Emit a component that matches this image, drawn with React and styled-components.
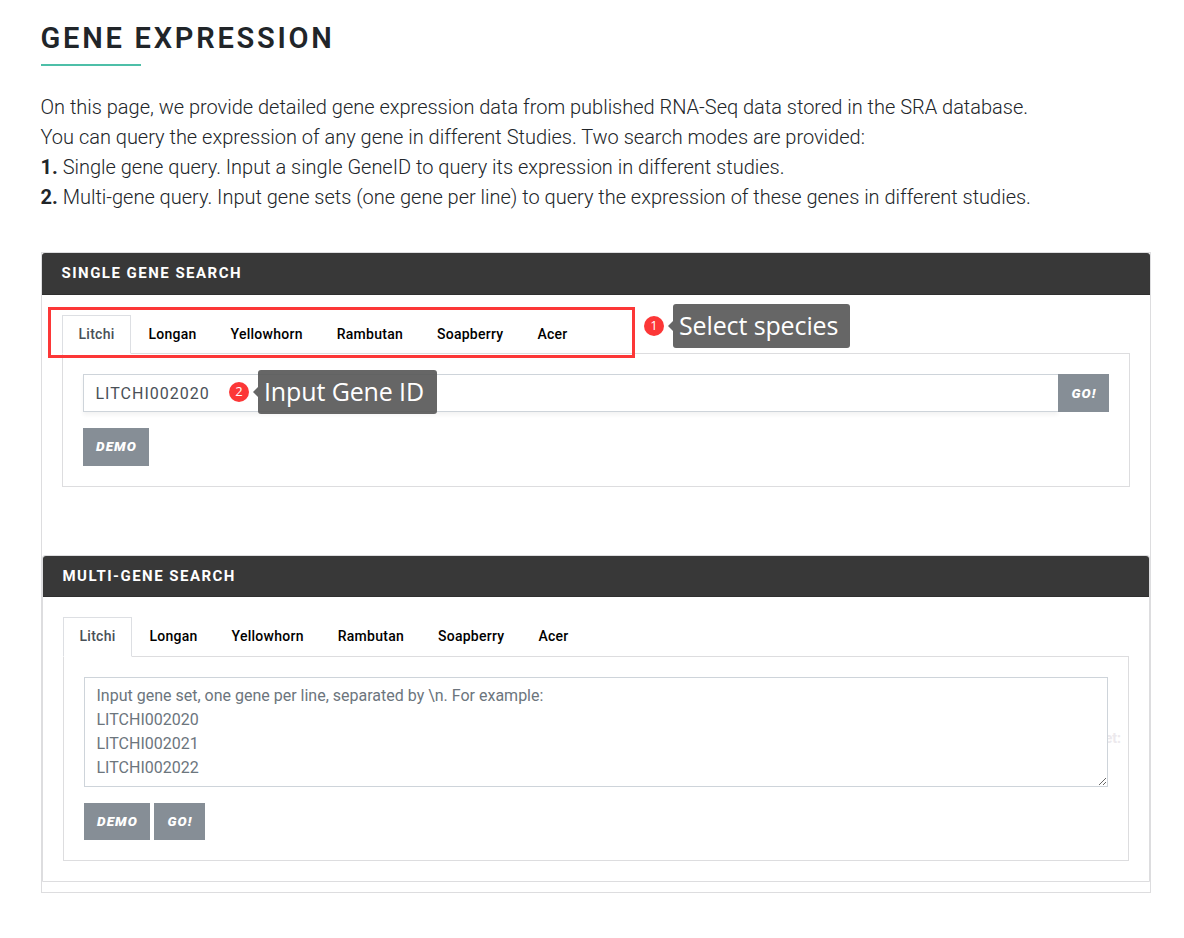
import React from "react";
import styled, { createGlobalStyle } from "styled-components";

const GlobalStyle = createGlobalStyle`
  *, *::before, *::after { box-sizing: border-box; }
  body {
    margin: 0;
    background: #fff;
    color: #212529;
    font-family: Roboto, "Liberation Sans", sans-serif;
    font-size: 16px;
  }
`;

const Page = styled.main`
  position: relative;
  width: 1184px;
  height: 938px;
  padding: 20px 33px 0 41px;
  overflow: hidden;
`;

const Title = styled.h1`
  margin: 0 0 0 -0.5px;
  height: 36px;
  font-size: 29px;
  line-height: 36px;
  font-weight: 600;
  letter-spacing: 2.77px;
  white-space: nowrap;
`;

const Rule = styled.div`
  width: 100px;
  height: 2px;
  margin: 8px 0 26px;
  background: #4dbfa8;
`;

const Intro = styled.div`
  height: 120px;
  margin: 0 0 40px -0.5px;
`;

const IntroLine = styled.p`
  margin: 0;
  font-size: 20px;
  line-height: 30px;
  font-weight: 300;
  letter-spacing: -0.01px;
  white-space: nowrap;

  b { font-weight: 700; }
`;

const Card = styled.section`
  width: ${(p) => (p.$nested ? "1108px" : "1110px")};
  height: ${(p) => p.$height};
  margin-top: ${(p) => (p.$nested ? "68px" : "0")};
  border: 1px solid #dddddf;
  border-radius: ${(p) => (p.$nested ? "3px 3px 0 0" : "0")};
`;

const CardHeader = styled.header`
  height: ${(p) => p.$height};
  padding: 0 19.5px;
  border-bottom: 1px solid #2f2f2f;
  border-radius: 3px 3px 0 0;
  background: #383838;
  color: #fff;
  font-size: 15px;
  line-height: 40px;
  font-weight: 700;
  letter-spacing: 1.48px;
  white-space: nowrap;
`;

const CardBody = styled.div`
  padding: 20px 20px 0;
`;

const Tabs = styled.nav`
  display: flex;
  height: ${(p) => p.$height};
  margin-bottom: -1px;
`;

const Tab = styled.span`
  position: relative;
  padding: ${(p) => (p.$active ? "0 15.9px 0 15.5px" : "0 16px")};
  border: 1px solid ${(p) => (p.$active ? "#dddfe3" : "transparent")};
  border-bottom-color: ${(p) => (p.$active ? "#fff" : "transparent")};
  background: ${(p) => (p.$active ? "#fff" : "transparent")};
  color: ${(p) => (p.$active ? "#495057" : "#000")};
  font-size: 14px;
  line-height: 37px;
  font-weight: 500;
  letter-spacing: 0.26px;
  white-space: nowrap;
`;

const Panel = styled.div`
  height: ${(p) => p.$height};
  padding: 20px;
  border: 1px solid #dddddf;
`;

const SearchRow = styled.div`
  display: flex;
  height: 38px;
  margin-bottom: 16px;
`;

const GeneInput = styled.input`
  flex: 1;
  min-width: 0;
  padding: 0 12px 0 11.5px;
  border: 1px solid #ced4da;
  border-right: 0;
  border-radius: 0;
  outline: 0;
  background: #fff;
  box-shadow: 0 3px 4px rgba(0, 0, 0, 0.05);
  color: #495057;
  font: 400 16px Roboto, sans-serif;
  letter-spacing: 1px;
`;

const Button = styled.button`
  width: ${(p) => p.$width};
  height: ${(p) => p.$height || "38px"};
  padding: ${(p) => (p.$attached ? "0 0 0 1px" : "0 0 2px 1px")};
  border: 0;
  background: #868e96;
  color: #fff;
  font: italic 900 13.6px/36px Roboto, sans-serif;
  letter-spacing: 1.1px;
`;

const ButtonRow = styled.div`
  display: flex;
  gap: 4px;
`;

const GeneSetField = styled.div`
  position: relative;
  height: 110px;
  margin-bottom: 16px;
`;

const GeneSet = styled.textarea`
  position: relative;
  display: block;
  width: 100%;
  height: 110px;
  padding: 6px 12px 6px 11.5px;
  border: 1px solid #ced4da;
  border-radius: 0;
  outline: 0;
  overflow: hidden;
  resize: vertical;
  background: #fff;
  font: 400 16px/24px Roboto, sans-serif;

  &::placeholder { color: #6c757d; opacity: 1; }
`;

const FieldHint = styled.span`
  position: absolute;
  right: -13px;
  top: 51px;
  color: #ece9ed;
  font-size: 14px;
  line-height: 20px;
  font-weight: 700;
`;

const Highlight = styled.div`
  position: absolute;
  left: 48px;
  top: 307px;
  width: 587px;
  height: 51px;
  border: 3px solid #fc3737;
`;

const Marker = styled.span`
  position: absolute;
  left: ${(p) => p.$x}px;
  top: ${(p) => p.$y}px;
  width: 20px;
  height: 20px;
  border-radius: 50%;
  background: #fc3737;
  color: #fff;
  font: 400 13px/19px "Open Sans", "Noto Sans", sans-serif;
  text-align: center;
`;

const Callout = styled.div`
  position: absolute;
  left: ${(p) => p.$x}px;
  top: ${(p) => p.$y}px;
  width: ${(p) => p.$width}px;
  height: 44px;
  padding-left: 6px;
  border-radius: 3px;
  background: rgba(89, 89, 89, 0.92);
  color: #fff;
  font: 400 25px/43px "Open Sans", "Noto Sans", sans-serif;
  letter-spacing: -0.12px;
  white-space: nowrap;

  &::before {
    content: "";
    position: absolute;
    left: -5px;
    top: 17px;
    border: solid transparent;
    border-width: 5px 5px 5px 0;
    border-right-color: rgba(89, 89, 89, 0.92);
  }
`;

const SPECIES = ["Litchi", "Longan", "Yellowhorn", "Rambutan", "Soapberry", "Acer"];

const EXAMPLE = `Input gene set, one gene per line, separated by \\n. For example:
LITCHI002020
LITCHI002021
LITCHI002022`;

function SpeciesTabs({ height }) {
  return (
    <Tabs $height={height}>
      {SPECIES.map((name, i) => (
        <Tab key={name} $active={i === 0}>{name}</Tab>
      ))}
    </Tabs>
  );
}

export default function App() {
  return (
    <Page>
      <GlobalStyle />
      <Title>GENE EXPRESSION</Title>
      <Rule />
      <Intro>
        <IntroLine>On this page, we provide detailed gene expression data from published RNA-Seq data stored in the SRA database.</IntroLine>
        <IntroLine>You can query the expression of any gene in different Studies. Two search modes are provided:</IntroLine>
        <IntroLine><b>1.</b> Single gene query. Input a single GeneID to query its expression in different studies.</IntroLine>
        <IntroLine><b>2.</b> Multi-gene query. Input gene sets (one gene per line) to query the expression of these genes in different studies.</IntroLine>
      </Intro>

      <Card $height="641px">
        <CardHeader $height="42px">SINGLE GENE SEARCH</CardHeader>
        <CardBody>
          <SpeciesTabs height="39px" />
          <Panel $height="134px">
            <SearchRow>
              <GeneInput defaultValue="LITCHI002020" />
              <Button $attached $width="51px">GO!</Button>
            </SearchRow>
            <Button $width="66px">DEMO</Button>
          </Panel>
        </CardBody>

        <Card $nested $height="327px">
          <CardHeader $height="41px">MULTI-GENE SEARCH</CardHeader>
          <CardBody>
            <SpeciesTabs height="40px" />
            <Panel $height="205px">
              <GeneSetField>
                <FieldHint>et:</FieldHint>
                <GeneSet placeholder={EXAMPLE} />
              </GeneSetField>
              <ButtonRow>
                <Button $width="66px" $height="37px">DEMO</Button>
                <Button $width="51px" $height="37px">GO!</Button>
              </ButtonRow>
            </Panel>
          </CardBody>
        </Card>
      </Card>

      <Highlight />
      <Marker $x={644} $y={316}>1</Marker>
      <Callout $x={673} $y={304} $width={177}>Select species</Callout>
      <Marker $x={229} $y={382}>2</Marker>
      <Callout $x={258} $y={370} $width={179}>Input Gene ID</Callout>
    </Page>
  );
}
